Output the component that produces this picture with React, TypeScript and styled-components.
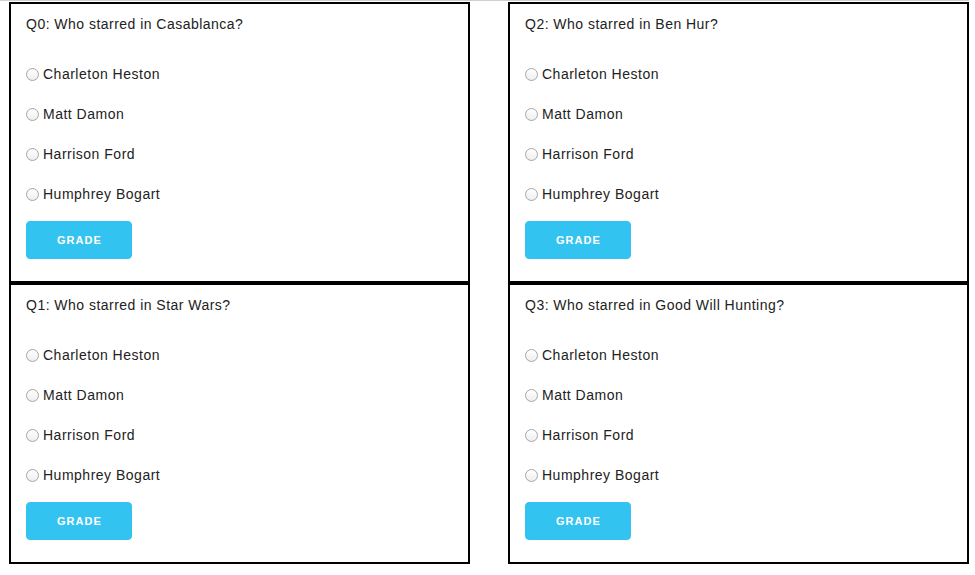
import React from 'react';
import styled, { createGlobalStyle } from 'styled-components';

const GlobalStyle = createGlobalStyle`
  html, body { margin: 0; padding: 0; background: #fff; }
  body { font-family: "Liberation Sans", Arial, Helvetica, sans-serif; color: #222; }
`;

const Page = styled.div`
  width: 969px;
  box-sizing: border-box;
  border-top: 1px solid #cfcfcf;
  padding: 1px 0 0 9px;
  display: grid;
  grid-template-columns: 461px 461px;
  column-gap: 38px;
`;

const Column = styled.div`
  display: flex;
  flex-direction: column;
`;

const Card = styled.form`
  box-sizing: border-box;
  border: 2px solid #000;
  padding: 10px 15px 22px;
  display: flex;
  flex-direction: column;
  margin: 0;
`;

const Question = styled.h3`
  margin: 0 0 20px;
  font-size: 14px;
  line-height: 20px;
  letter-spacing: 0.47px;
  font-weight: normal;
`;

const Option = styled.label`
  display: flex;
  align-items: center;
  gap: 4px;
  height: 40px;
  font-size: 14px;
  line-height: 20px;
  letter-spacing: 0.5px;
  cursor: pointer;
`;

const Radio = styled.input`
  appearance: none;
  -webkit-appearance: none;
  margin: 0;
  width: 13px;
  height: 13px;
  border-radius: 50%;
  border: 1px solid #a6a6a6;
  background: linear-gradient(#ffffff, #eeeeee);
  box-sizing: border-box;
  flex: none;
`;

const GradeButton = styled.button`
  align-self: flex-start;
  margin-top: 7px;
  box-sizing: border-box;
  height: 38px;
  padding: 0 29px 0 30px;
  border: 1px solid #33c3f0;
  border-radius: 4px;
  background: #33c3f0;
  color: #fff;
  font-family: "Liberation Sans", Arial, sans-serif;
  font-size: 11px;
  font-weight: 700;
  letter-spacing: 1px;
  text-transform: uppercase;
  line-height: 36px;
  cursor: pointer;
`;

const answers = ['Charleton Heston', 'Matt Damon', 'Harrison Ford', 'Humphrey Bogart'];

const questions = [
  { id: 0, movie: 'Casablanca' },
  { id: 1, movie: 'Star Wars' },
  { id: 2, movie: 'Ben Hur' },
  { id: 3, movie: 'Good Will Hunting' },
];

function QuizCard({ id, movie }: { id: number; movie: string }) {
  return (
    <Card onSubmit={(e) => e.preventDefault()}>
      <Question>Q{id}: Who starred in {movie}?</Question>
      {answers.map((a) => (
        <Option key={a}>
          <Radio type="radio" name={`q${id}`} value={a} />
          <span>{a}</span>
        </Option>
      ))}
      <GradeButton type="submit">Grade</GradeButton>
    </Card>
  );
}

export default function App() {
  return (
    <>
      <GlobalStyle />
      <Page>
        <Column>
          <QuizCard {...questions[0]} />
          <QuizCard {...questions[1]} />
        </Column>
        <Column>
          <QuizCard {...questions[2]} />
          <QuizCard {...questions[3]} />
        </Column>
      </Page>
    </>
  );
}
